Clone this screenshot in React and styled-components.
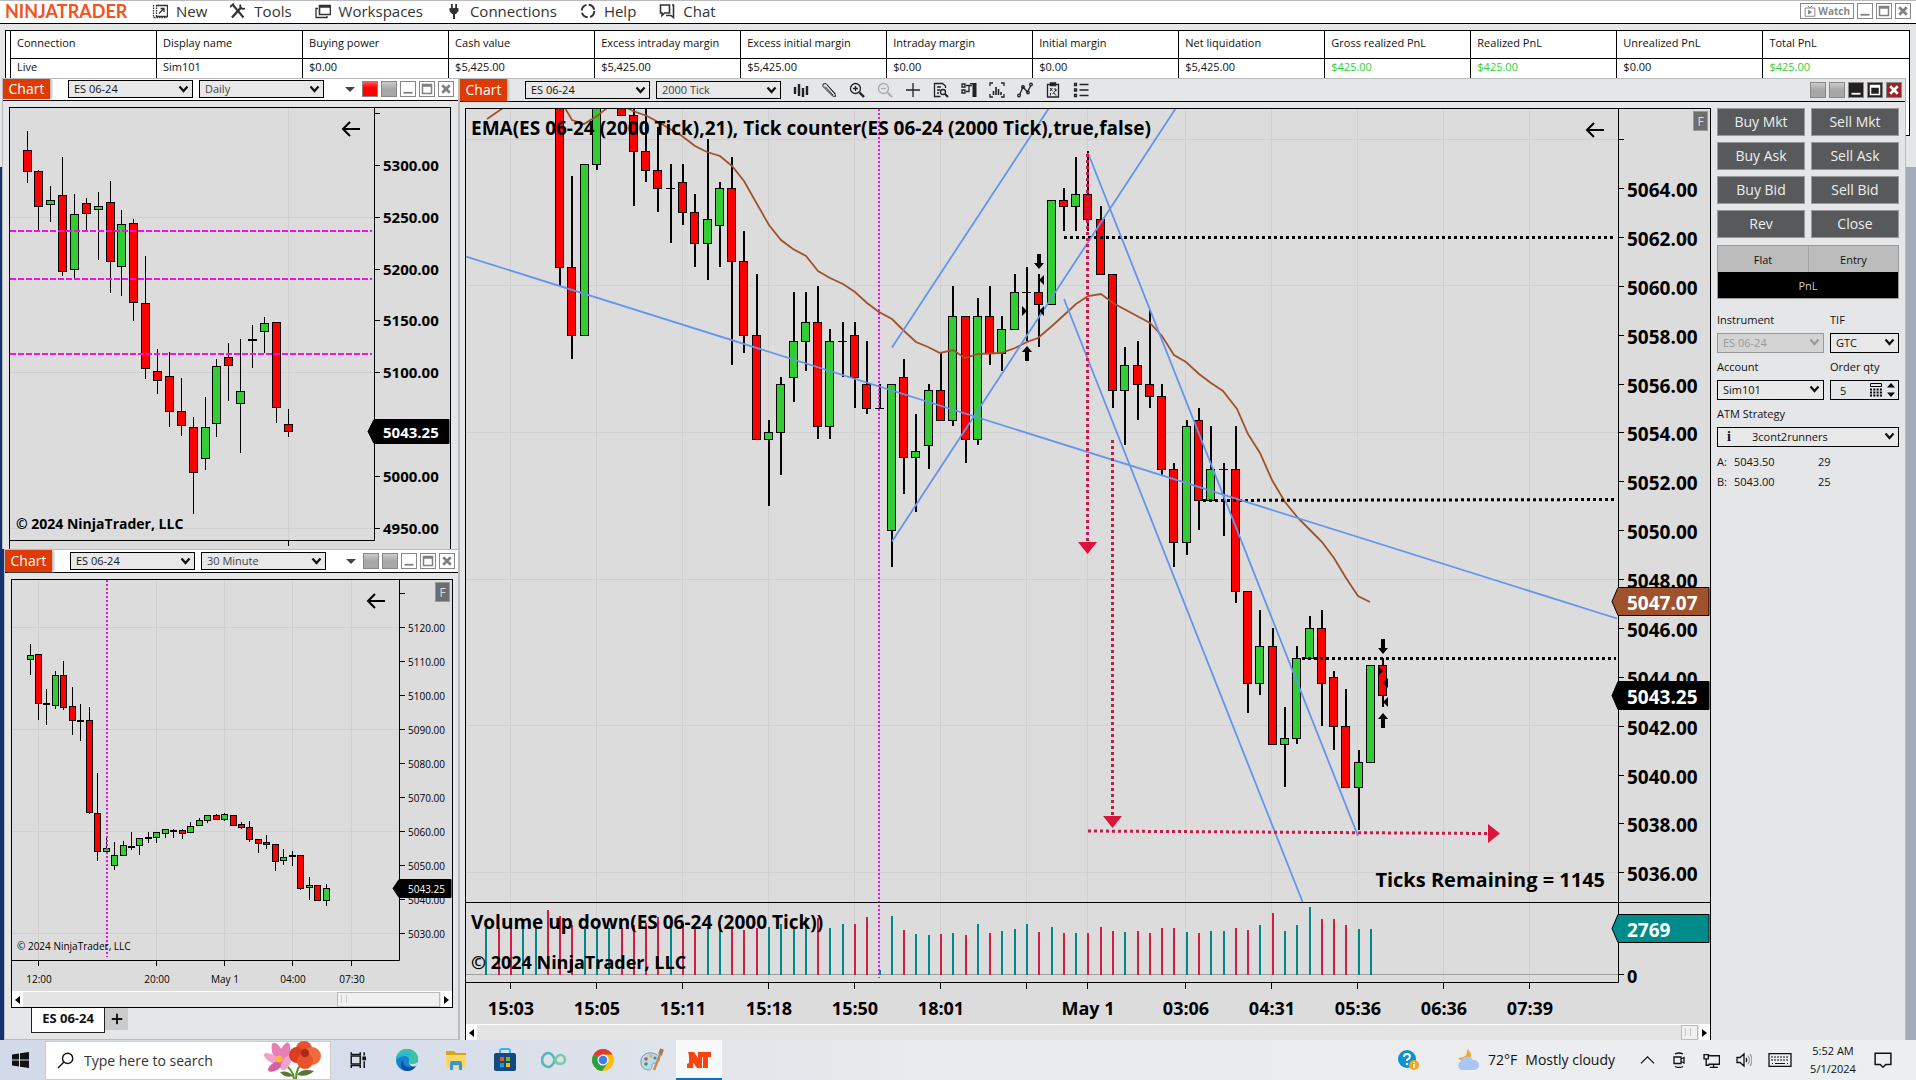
import React from "react";
import styled, { createGlobalStyle, css } from "styled-components";

const Global = createGlobalStyle`
  * { box-sizing: border-box; }
  html, body { margin: 0; height: 100%; }
  body { font-family: "Open Sans", "Noto Sans", sans-serif; font-size: 12px; color: #111; overflow: hidden; }
  button, select, input { font: inherit; color: inherit; margin: 0; padding: 0; border-radius: 0; }
  svg { display: block; }
`;

/* ---------- Desktop frame ---------- */

const Desktop = styled.div`
  display: flex;
  flex-direction: column;
  height: 100vh;
  background: linear-gradient(90deg, #14326e 50%, #a4abb8 50%);
`;

const AccountWindow = styled.header`
  flex: 0 0 167px;
  background: #e5e6e8;
  border-top: 1px solid #bbb;
`;

const Workspace = styled.main`
  flex: 1;
  min-height: 0;
  display: flex;
  margin-top: -89px;
  padding-right: 10px;
  position: relative;
`;

const LeftColumn = styled.div`
  flex: 0 0 459px;
  display: flex;
  flex-direction: column;
`;

/* ---------- Top menu ---------- */

const MenuBar = styled.div`
  height: 23px;
  display: flex;
  align-items: center;
  background: #fff;
  border-bottom: 1px solid #000;
  padding: 0 5px 2px;
`;

const Brand = styled.div`
  width: 147px;
  font: 700 18px/20px Lato, sans-serif;
  color: #f4511e;
`;

const Menu = styled.nav`
  display: flex;
  gap: 23px;
  flex: 1;
`;

const MenuButton = styled.button`
  display: flex;
  align-items: center;
  gap: 8px;
  background: none;
  border: 0;
  color: #333;
  font-size: 15px;
  line-height: 20px;
`;

const WatchButton = styled.button`
  height: 16px;
  display: flex;
  align-items: center;
  gap: 2px;
  padding: 0 3px;
  margin-right: 3px;
  background: #fff;
  border: 1px solid #888;
  color: #888;
  font-size: 10px;
  font-weight: 700;
  line-height: 14px;
`;

/* ---------- Account table ---------- */

const TableFrame = styled.div`
  height: 106px;
  margin: 6px 6px 0 5px;
  padding-left: 4px;
  border: 1px solid #000;
  background: #fff;
`;

const AccountTable = styled.table`
  width: 100%;
  table-layout: fixed;
  border-collapse: collapse;
  border-left: 1px solid #000;
  font-size: 11px;
  line-height: 16px;
  th, td {
    text-align: left;
    font-weight: 400;
    padding: 0 6px 2px;
    border-right: 1px solid #000;
    white-space: nowrap;
  }
  th { height: 27px; border-bottom: 1px solid #000; }
  td { height: 20px; }
  th:last-child, td:last-child { border-right: 0; }
`;

const Money = styled.td`
  color: ${(p) => (p.$gain ? "#32cd32" : "#111")};
`;

/* ---------- Windows ---------- */

const Window = styled.section`
  flex: ${(p) => p.$flex || "1"};
  min-width: 0;
  min-height: 0;
  display: flex;
  flex-direction: column;
  margin-left: ${(p) => p.$indent || 0}px;
  background: #e5e6e8;
  border: solid #b9bbbd;
  border-width: ${(p) => (p.$open ? "1px 1px 0" : "1px")};
`;

const TitleBar = styled.div`
  flex: 0 0 ${(p) => p.$height || 23}px;
  display: flex;
  align-items: center;
  gap: 6px;
  padding-right: ${(p) => p.$end || 3}px;
  padding-bottom: ${(p) => (p.$height ? 1 : 0)}px;
  background: ${(p) => (p.$grey ? "#e5e6e8" : "#fff")};
  border-bottom: 1px solid #000;
`;

const ChartTab = styled.button`
  align-self: stretch;
  width: 47px;
  margin-right: 12px;
  border: 0;
  background: #de3b04;
  color: #fff;
  font-size: 14px;
  line-height: 20px;
  box-shadow: 2px 0 2px #bbb;
`;

const SelectWrap = styled.div`
  position: relative;
  width: ${(p) => (p.$fill ? "100%" : "125px")};
  flex: none;
  svg { position: absolute; right: 4px; top: 5px; pointer-events: none; }
`;

const SelectBox = styled.select`
  display: block;
  width: 100%;
  height: ${(p) => p.$h || 18}px;
  appearance: none;
  border: 1px solid ${(p) => (p.disabled ? "#999" : "#000")};
  background: ${(p) => (p.disabled ? "#d4d4d4" : "#e8e8e8")};
  color: ${(p) => (p.disabled ? "#999" : p.$soft ? "#444" : "#111")};
  opacity: 1;
  padding-left: ${(p) => p.$pad || 5}px;
  font-size: 11px;
  line-height: 16px;
`;

const WindowKeys = styled.div`
  display: flex;
  align-items: center;
  gap: 3px;
  margin-left: auto;
`;

const keyLook = {
  red: css`background: linear-gradient(#ff5a5a, #f00 40%);`,
  grey: css`background: linear-gradient(#ccc, #a8a6a7 50%);`,
  plain: css`background: #fff;`,
  dark: css`background: #231f20; color: #fff;`,
  close: css`background: #9b2226; color: #fff;`,
};

const KeyButton = styled.button`
  width: 16px;
  height: 16px;
  display: grid;
  place-items: center;
  border: 1px solid #888;
  color: #808080;
  ${(p) => keyLook[p.$look]}
`;

const Caret = styled.span`
  border: 5px solid transparent;
  border-top-color: #444;
  border-bottom: 0;
  margin-right: 4px;
`;

const Tools = styled.div`
  display: flex;
  gap: 12px;
  margin-left: 6px;
`;

const ToolButton = styled.button`
  width: 16px;
  height: 16px;
  border: 0;
  background: none;
  color: ${(p) => (p.disabled ? "#aaa" : "#222")};
`;

const WindowBody = styled.div`
  flex: 1;
  min-height: 0;
  display: flex;
  flex-direction: ${(p) => (p.$row ? "row" : "column")};
  padding: 6px ${(p) => p.$right || 0}px 0 ${(p) => p.$left || 6}px;
`;

const ChartBox = styled.div`
  flex: 1;
  min-width: 0;
  min-height: 0;
  display: flex;
  flex-direction: column;
  border: 1px solid #000;
  border-bottom-width: ${(p) => (p.$open ? 0 : 1)}px;
  background: #dcdcdc;
`;

const Plot = styled.svg`
  flex: 1;
  min-height: 0;
  width: 100%;
  font-family: "Open Sans", "Noto Sans", sans-serif;
`;

const ScrollBar = styled.div`
  flex: 0 0 16px;
  min-height: 0;
  display: flex;
  border-top: 1px solid #fff;
  background: #e4e4e4;
`;

const ScrollArrow = styled.button`
  width: 11px;
  border: 0;
  background: #fff;
  display: grid;
  place-items: center;
`;

const ScrollThumb = styled.div`
  width: ${(p) => p.$w}px;
  margin-left: auto;
  margin-right: 1px;
  border: 1px solid #bbb;
  background: #f0f0f0;
  padding: 2px 3px;
  &::before { content: ""; display: block; width: 4px; height: 8px; border: solid #ccc; border-width: 0 1px; }
`;

const TabRow = styled.div`
  flex: 0 0 31px;
  display: flex;
  align-items: flex-start;
  padding-left: 20px;
`;

const SheetTab = styled.button`
  width: 74px;
  height: 25px;
  border: 1px solid #222;
  border-top: 0;
  background: #fff;
  font-size: 13px;
  font-weight: 700;
  line-height: 20px;
  padding-bottom: 4px;
`;

const AddTab = styled.button`
  width: 23px;
  height: 22px;
  border: 0;
  background: #cbcbcb;
  display: grid;
  place-items: center;
`;

/* ---------- Order panel ---------- */

const OrderPanel = styled.aside`
  flex: 0 0 194px;
  padding: 0 6px;
`;

const OrderGrid = styled.div`
  display: grid;
  grid-template-columns: 1fr 1fr;
  gap: 6px;
`;

const OrderButton = styled.button`
  height: 28px;
  border: 1px solid #999;
  background: #58595b;
  color: #eee;
  font-size: 14px;
  line-height: 20px;
`;

const Position = styled.div`
  display: grid;
  grid-template-columns: 1fr 1fr;
  margin-top: 7px;
  border: 1px solid #999;
`;

const PositionCell = styled.div`
  height: 26px;
  display: grid;
  place-items: center;
  font-size: 11px;
  background: #bcbcbc;
  & + & { border-left: 1px solid #a4a4a4; }
`;

const PnlButton = styled.button`
  grid-column: 1 / -1;
  height: 26px;
  border: 0;
  background: #000;
  color: #ccc;
  font-size: 11px;
`;

const FieldGrid = styled.div`
  display: grid;
  grid-template-columns: 107px 1fr;
  gap: 6px;
  margin-top: 13px;
`;

const Field = styled.div`
  grid-column: ${(p) => (p.$wide ? "1 / -1" : "auto")};
  label { display: block; font-size: 11px; line-height: 16px; padding-bottom: 5px; }
`;

const QtyBox = styled.div`
  height: 20px;
  display: flex;
  align-items: center;
  gap: 5px;
  padding: 0 3px 0 9px;
  border: 1px solid #000;
  input { width: 100%; min-width: 0; border: 0; background: none; font-size: 11px; outline: 0; }
  svg { flex: none; }
`;

const StrategyWrap = styled(SelectWrap)`
  &::before {
    content: "i";
    position: absolute;
    left: 10px;
    top: 1px;
    font: 700 14px/17px "Liberation Serif", serif;
  }
`;

const Quotes = styled.dl`
  display: grid;
  grid-template-columns: 17px 84px 1fr;
  margin: 5px 0 0;
  font-size: 11px;
  line-height: 20px;
  dt, dd { margin: 0; }
`;

/* ---------- Taskbar ---------- */

const Taskbar = styled.footer`
  flex: 0 0 40px;
  position: relative;
  display: flex;
  align-items: center;
  background: linear-gradient(90deg, #d2daea, #d9dfea 25%, #e9ebec 48%, #eceeef);
`;

const StartButton = styled.button`
  width: 45px;
  height: 40px;
  border: 0;
  background: none;
  display: grid;
  place-items: center;
  padding-right: 5px;
`;

const SearchBox = styled.label`
  width: 286px;
  height: 39px;
  display: flex;
  align-items: center;
  gap: 10px;
  padding: 0 8px 0 11px;
  background: #fff;
  border: 1px solid #ccc;
  input { flex: 1; min-width: 0; border: 0; outline: 0; font-size: 14px; background: none; }
  input::placeholder { color: #333; opacity: 1; }
`;

const AppButton = styled.button`
  width: ${(p) => (p.$active ? 46 : 49)}px;
  height: 40px;
  border: 0;
  display: grid;
  place-items: center;
  background: ${(p) => (p.$active ? "#f6f8fa" : "none")};
  box-shadow: ${(p) => (p.$active ? "inset 0 -2px #0f70c0" : "none")};
`;

const AppList = styled.div`
  display: flex;
  margin-left: 2px;
`;

const Tray = styled.div`
  display: flex;
  align-items: center;
  margin-left: auto;
  padding-right: 24px;
  gap: 16px;
`;

const Weather = styled.button`
  display: flex;
  align-items: center;
  gap: 8px;
  margin: 0 9px 0 21px;
  border: 0;
  background: none;
  font-size: 14px;
  line-height: 20px;
`;

const Clock = styled.time`
  width: 50px;
  font-size: 11px;
  line-height: 18px;
  text-align: center;
`;

/* ---------- Icons ---------- */

const Icon = ({ size = 16, children, ...rest }) => (
  <svg width={size} height={size} viewBox="0 0 16 16" fill="none" stroke="currentColor" strokeWidth="1.3" aria-hidden="true" {...rest}>
    {children}
  </svg>
);

const menuIcons = {
  New: <><path d="M4 2.500h11.500v11H4" strokeDasharray="30 0" /><path d="M1.500 2v13M2 14.500h13M4.500 2v11" strokeDasharray="1.500 1" /><path d="M7 10.500 11.500 6M8.500 5.500h3.500V9" /></>,
  Tools: <><path d="M2 14.500 11 4.500" strokeWidth="2.400" /><path d="M2.500 1.500 13.500 14.500" strokeWidth="2" /><path d="M0 4 4 .5M10.500 1.500c-1 3 1 5 4.500 4" strokeWidth="1.800" /></>,
  Workspaces: <><path d="M4.500 2.500h11v9h-11zM4.500 4h11" strokeWidth="1.600" /><path d="M3 5.500H1v9h11V13" /></>,
  Connections: <path d="M5 1h1.800v4h2.400V1H11v4h1.500v3L10 11H9v5H7v-5H6L3.500 8V5H5z" fill="currentColor" stroke="none" />,
  Help: <circle cx="8" cy="8" r="6.300" strokeWidth="2" strokeDasharray="7.500 2.400" />,
  Chat: <><path d="M1.500 2h9v8h-5L3 12.500V10H1.500z" strokeWidth="1.600" /><path d="M13 2h1.500v12.500L12 12.500H7" strokeWidth="1.600" /></>,
};

const toolIcons = [
  ["Bar style", <><path d="M2 5v7M6 2v12M10 6v9M14 4v9" strokeWidth="2.400" /></>],
  ["Draw", <path d="M2 2l3-.5 9 10 .5 3-3-.5L2 4.500zM4 4.500l8 8.500M6 3l8 9" strokeWidth="1" />],
  ["Zoom in", <><circle cx="6.500" cy="6.500" r="5" /><path d="M4 6.500h5M6.500 4v5" /><path d="M10.500 10.500 15 15" strokeWidth="2.400" /></>],
  ["Zoom out", <><circle cx="6.500" cy="6.500" r="5" /><path d="M4 6.500h5" /><path d="M10.500 10.500 15 15" strokeWidth="2" /></>, true],
  ["Crosshair", <path d="M8 1v14M1 8h14" />],
  ["Data box", <><path d="M12.500 6V4l-3-2.500h-8v13h6M4 5h4M4 8h3M4 11h2" /><circle cx="10" cy="10" r="2.500" /><path d="M12 12l3 3" strokeWidth="2" /></>],
  ["Chart trader", <><path d="M13.500 1v14" strokeWidth="4" /><path d="M9 1.700h3" /><path d="M1 2h3v3H1zM1 8h3v3H1zM5 3.500h6M5 9.500h3V3.500" /></>],
  ["Indicators", <><path d="M4 1H1v3M12 1h3v3M4 15H1v-3M12 15h3v-3" /><path d="M4.500 9v4M7 5v8M9.500 7V13M12 10v3" strokeWidth="1.600" /></>],
  ["Strategies", <><path d="M2.500 13 6 5l4.500 5L14 3" /><circle cx="2" cy="13.500" r="1.300" /><circle cx="6" cy="5" r="1.300" /><circle cx="11" cy="10.500" r="1.300" /><circle cx="14" cy="2.500" r="1.300" /></>],
  ["Performance", <><path d="M2.500 2.500h11v12.500h-11zM5.500 1h5v2.500h-5z" /><path d="M5 6l2.500 3M7.500 6 5 9M7.500 12l3.500-4M9 7h2v2M5.500 13.500v-2.500M9 11l2 2.500" strokeWidth="1" /></>],
  ["Properties", <path d="M1.500 1.500h2v2h-2zM1.500 7h2v2h-2zM1.500 12.500h2v2h-2zM6.500 2.500h9M6.500 8h9M6.500 13.500h9" />],
];

const Chevron = ({ grey }) => (
  <svg width="11" height="8" viewBox="0 0 11 8" fill="none" stroke={grey ? "#999" : "#111"} strokeWidth="2.200" aria-hidden="true">
    <path d="M1.500 1.500 5.500 6l4-4.500" />
  </svg>
);

const Minimize = () => <Icon size={12}><path d="M2 13h12" strokeWidth="2.400" /></Icon>;
const Maximize = () => <Icon size={12}><path d="M2 2h12v12H2zM2 4h12" strokeWidth="2" /></Icon>;
const Close = () => <Icon size={12}><path d="M3 3l10 10M13 3 3 13" strokeWidth="3.600" /></Icon>;

const ArrowGlyph = ({ right }) => (
  <svg width="5" height="8" viewBox="0 0 5 8" aria-hidden="true">
    <path d={right ? "M0 0l5 4-5 4z" : "M5 0 0 4l5 4z"} fill="#000" />
  </svg>
);

/* ---------- Shared controls ---------- */

const Picker = ({ label, value, soft }) => (
  <SelectWrap>
    <SelectBox aria-label={label} $soft={soft} defaultValue={value}>
      <option>{value}</option>
    </SelectBox>
    <Chevron />
  </SelectWrap>
);

const Keys = ({ looks, caret }) => (
  <WindowKeys>
    {caret && <Caret />}
    <KeyButton $look={looks[0]} aria-label="Instrument link" />
    <KeyButton $look={looks[1]} aria-label="Interval link" />
    <KeyButton $look={looks[2]} aria-label="Minimize"><Minimize /></KeyButton>
    <KeyButton $look={looks[3]} aria-label="Maximize"><Maximize /></KeyButton>
    <KeyButton $look={looks[4]} aria-label="Close"><Close /></KeyButton>
  </WindowKeys>
);

const Scroll = ({ thumb }) => (
  <ScrollBar>
    <ScrollArrow aria-label="Scroll left"><ArrowGlyph /></ScrollArrow>
    <ScrollThumb $w={thumb} />
    <ScrollArrow aria-label="Scroll right"><ArrowGlyph right /></ScrollArrow>
  </ScrollBar>
);

/* ---------- Chart primitives ---------- */

const FILL = { R: "#ff0000", G: "#32cd32" };

const Candle = ({ x, high, top, bottom, low, kind, half, wick }) => (
  <g shapeRendering="crispEdges">
    <rect x={x} y={high} width={wick} height={Math.max(1, low - high)} fill="#000" />
    {kind === "D" ? (
      <rect x={x - half} y={top} width={half * 2 + 1} height={wick === 2 ? 1 : 2} fill="#000" />
    ) : (
      <rect x={x - half + 0.5} y={top + 0.5} width={half * 2} height={Math.max(1, bottom - top)} fill={FILL[kind]} stroke="#000" />
    )}
  </g>
);

const BackArrow = ({ x, y }) => (
  <path d={`M${x + 18} ${y}H${x + 1}M${x + 8} ${y - 7}L${x + 1} ${y}L${x + 8} ${y + 7}`} fill="none" stroke="#000" strokeWidth="2" />
);

const PriceTag = ({ x, right, y, h, color, size, tx, children }) => (
  <g>
    <path d={`M${x} ${y}L${x + 6} ${y - h / 2}H${right}V${y + h / 2}H${x + 6}Z`} fill={color} stroke="#000" />
    <text x={tx} y={y + size / 2 - 1} fontSize={size} fontWeight={size > 12 ? 700 : 400} fill="#fff">{children}</text>
  </g>
);

const FBadge = ({ x, y }) => (
  <g>
    <rect x={x} y={y} width="14" height="19" fill="#6d6d6d" stroke="#999" />
    <text x={x + 7} y={y + 14} fontSize="12" textAnchor="middle" fill="#ddd">F</text>
  </g>
);

/* ---------- Daily and half-hour data: three units per pixel ---------- */

const DAILY = [
  [82, "R", 168, 226, 288, 326], [115, "R", 285, 289, 395, 473], [151, "G", 333, 376, 389, 443],
  [187, "R", 246, 361, 590, 605], [223, "G", 357, 418, 584, 610], [259, "R", 369, 385, 416, 466],
  [295, "G", 353, 394, 402, 557], [331, "R", 318, 381, 560, 656], [364, "G", 405, 448, 575, 665],
  [400, "R", 432, 445, 683, 738], [436, "R", 543, 685, 881, 914], [472, "R", 822, 889, 917, 959],
  [508, "R", 831, 904, 1010, 1058], [544, "R", 909, 1009, 1052, 1085], [580, "R", 1026, 1057, 1193, 1319],
  [616, "G", 966, 1057, 1151, 1187], [649, "G", 852, 874, 1046, 1088], [685, "R", 804, 847, 872, 980],
  [721, "G", 792, 949, 986, 1136], [757, "D", 750, 793, 795, 881], [793, "G", 726, 744, 770, 836],
  [829, "R", 742, 742, 998, 1046], [865, "R", 1002, 1048, 1070, 1088],
];

const HALF_HOUR = [
  [91, "G", 297, 331, 342, 392], [115, "R", 328, 328, 476, 527], [139, "D", 432, 475, 477, 540],
  [167, "G", 378, 391, 482, 494], [190, "R", 348, 391, 488, 497], [217, "R", 426, 484, 527, 570],
  [241, "D", 477, 525, 526, 588], [268, "R", 486, 526, 803, 809], [292, "R", 684, 805, 920, 950],
  [319, "G", 876, 910, 920, 925], [343, "G", 892, 931, 962, 977], [370, "G", 888, 901, 932, 932],
  [394, "D", 861, 904, 905, 917], [418, "G", 880, 880, 902, 932], [446, "D", 861, 877, 879, 896],
  [469, "G", 862, 862, 878, 896], [496, "G", 853, 853, 866, 881], [520, "D", 853, 855, 857, 881],
  [547, "R", 853, 856, 866, 884], [571, "G", 831, 844, 863, 866], [598, "G", 819, 826, 842, 843],
  [622, "G", 811, 811, 827, 836], [649, "R", 808, 811, 824, 824], [673, "G", 804, 808, 824, 830],
  [700, "R", 811, 811, 842, 842], [724, "R", 832, 838, 848, 854], [748, "R", 828, 847, 884, 893],
  [775, "R", 882, 882, 896, 926], [799, "R", 870, 892, 899, 914], [826, "R", 898, 898, 950, 978],
  [850, "G", 912, 937, 947, 962], [877, "D", 918, 931, 932, 965], [901, "R", 931, 931, 1031, 1037],
  [928, "G", 996, 1021, 1028, 1067], [952, "R", 1021, 1021, 1067, 1067], [979, "G", 1018, 1030, 1067, 1085],
];

const SmallCandles = ({ data, base, half }) => {
  const y = (v) => base + Math.floor(v / 3);
  return data.map(([x, kind, h, t, b, l]) => (
    <Candle key={x} x={Math.floor(x / 3)} kind={kind} high={y(h)} top={y(t)} bottom={y(b)} low={y(l)} half={half} wick={1} />
  ));
};

const DailyChart = () => {
  const levels = [[5300, 165], [5250, 217], [5200, 269], [5150, 320], [5100, 372], [5000, 476], [4950, 528]];
  return (
    <Plot viewBox="10 108 440 441" preserveAspectRatio="xMinYMin meet" role="img" aria-label="ES 06-24 daily chart">
      <path d="M10 217.500H374M10 372.500H374M10 528.500H374M288.500 108V540" stroke="#d0d0d0" />
      <SmallCandles data={DAILY} base={75} half={4} />
      <path d="M10 231H372M10 279H372M10 354H372" stroke="#f012e0" strokeWidth="2" strokeDasharray="6 2" shapeRendering="crispEdges" />
      <BackArrow x={342} y={129} />
      <path d="M374.500 108V540.500H10M288.500 540V546M375 113.500h5" stroke="#000" fill="none" />
      {levels.map(([price, y]) => (
        <g key={price}>
          <path d={`M375 ${y + 0.5}h5`} stroke="#000" />
          <text x="383" y={y + 6} fontSize="15" fontWeight="700">{price}.00</text>
        </g>
      ))}
      <PriceTag x={368} right={449} y={431.5} h={24} size={15} tx={383} color="#000">5043.25</PriceTag>
      <text x="16" y="529" fontSize="14" fontWeight="700">© 2024 NinjaTrader, LLC</text>
    </Plot>
  );
};

const HalfHourChart = () => {
  const times = [["12:00", 38], ["20:00", 156], ["May 1", 224], ["04:00", 292], ["07:30", 351]];
  const prices = Array.from({ length: 10 }, (_, i) => [5120 - i * 10, 627 + i * 34]);
  return (
    <Plot viewBox="12 580 440 411" preserveAspectRatio="xMinYMin meet" role="img" aria-label="ES 06-24 30 minute chart">
      {times.map(([t, x]) => <path key={t} d={`M${x + 0.5} 580V960`} stroke="#d0d0d0" />)}
      <path d="M12 627.500H399M12 729.500H399M12 831.500H399M12 933.500H399" stroke="#d0d0d0" />
      <SmallCandles data={HALF_HOUR} base={545} half={3} />
      <path d="M107 580V957" stroke="#d61ad6" strokeWidth="2" strokeDasharray="2 2" shapeRendering="crispEdges" />
      <BackArrow x={367} y={601} />
      <path d="M399.500 580V960.500H12M400 593.500h5" stroke="#000" fill="none" />
      {prices.map(([price, y]) => (
        <g key={price}>
          <path d={`M400 ${y + 0.5}h5`} stroke="#000" />
          <text x="408" y={y + 5} fontSize="10">{price}.00</text>
        </g>
      ))}
      {times.map(([t, x]) => (
        <g key={t}>
          <path d={`M${x + 0.5} 961v5`} stroke="#000" />
          <text x={x + 1} y="983" fontSize="10" textAnchor="middle">{t}</text>
        </g>
      ))}
      <PriceTag x={393} right={451} y={888.5} h={18} size={10} tx={408} color="#000">5043.25</PriceTag>
      <FBadge x={435.5} y={582.5} />
      <text x="17" y="950" fontSize="10">© 2024 NinjaTrader, LLC</text>
    </Plot>
  );
};

/* ---------- Tick chart: high, top, bottom, low in quarter points below 5064 ---------- */

const FIRST_CANDLE = 4;
const TICKS = `R -20 -20 13 16|R -2 13 24 28|G -4 -4 24 24|G -20 -20 -4 -3|R -20 -20 -19 -19|R -20 -20 -12 -12|R -13 -12 -6 3|R -20 -6 -3 -1|R -10 -3 0 4|D -4 0 0 9|R -4 -1 4 6|R 1 4 9 13|G -8 5 9 15|G -1 0 6 13|R -5 0 12 29|R 7 12 24 27|R 14 24 41 41|G 38 40 41 52|G 31 32 40 47|G 17 25 31 35|G 17 22 25 30|R 16 22 39 41|G 23 25 39 41|D 22 25 25 31|R 22 24 31 36|R 25 32 36 37|D 32 36 36 36|G 32 32 56 62|R 28 31 44 50|G 37 43 44 53|G 32 33 42 46|R 27 33 38 38|G 16 21 38 39|R 21 21 41 45|G 18 21 41 42|R 16 21 27 29|G 21 23 27 30|G 14 17 23 23|D 13 17 17 25|R 14 17 19 26|G 2 2 19 19|R 0 2 3 7|G -5 1 3 7|R -6 1 5 7|R 3 5 14 14|R 14 14 33 36|G 26 29 33 42|R 25 29 32 38|R 20 32 34 36|R 32 34 46 47|R 45 46 58 62|G 38 39 58 60|R 36 38 51 56|G 39 46 51 51|D 45 46 46 57|R 39 46 66 68|R 66 66 81 86|G 69 75 81 83|R 72 75 91 91|G 85 90 91 98|G 75 77 90 91|G 70 72 77 77|R 69 72 81 88|R 79 80 88 92|R 82 88 98 98|G 92 94 98 105|G 78 78 94 94|R 77 78 83 85`
  .split("|")
  .map((row) => row.split(" "));

const VOLUME = "T47 R47 R47 T47 T47 R65 R59 R50 T48 T48 T47 R47 R50 R52 R58 T48 R51 R47 T48 T51 R47 R45 R47 T48 T51 T48 T58 R57 T47 T51 R51 R58 T5 T59 R45 T41 T40 R41 T42 R40 T51 R42 T44 T46 T51 R43 T48 R42 T42 R42 R48 R44 T43 R44 R42 R47 R47 T43 R42 T44 T44 R47 R45 T50 R62 T44 T50 T68 R56 R56 R50 T46 T46".split(" ");

const barX = (k) => 510 + Math.round((k * 86) / 7);
const tickY = (n) => 188 + Math.round(n * 6.11);

const EMA = [
  "487,119 503,108",
  "565,108 572,120 584,124 597,116 607,108",
  "627,108 633,111 647,116 660,123 670,129 682,136 695,146 707,152 720,156 732,166 744,181 757,204 769,225 781,240 793,249 806,256 818,271 830,278 843,284 855,292 867,303 879,312 892,319 903,330 916,342 928,347 940,353 953,350 965,358 978,354 1001,353 1015,348 1027,342 1038,338 1052,326 1063,316 1076,304 1088,296 1101,294 1113,303 1137,316 1150,323 1162,336 1174,355 1186,362 1199,374 1211,383 1223,391 1237,409 1248,434 1260,453 1272,480 1285,502 1298,518 1309,529 1322,542 1334,558 1346,578 1358,596 1370,602",
];

const Fill = ({ x, y, up }) => {
  const s = up ? -1 : 1;
  return <path d={`M${x - 2} ${y - 7 * s}h4v${9 * s}h3l-5 ${6 * s}l-5 ${-6 * s}h3z`} fill="#000" />;
};

const Marker = ({ x, y, right }) => (
  <path d={right ? `M${x - 2} ${y - 5}l5 5l-5 5z` : `M${x + 2} ${y - 5}l-5 5l5 5z`} fill="#000" />
);

const TickChart = () => {
  const times = [
    [510, "15:03"], [596, "15:05"], [682, "15:11"], [768, "15:18"], [854, "15:50"], [940, "18:01"], [1026, ""],
    [1087, "May 1"], [1185, "03:06"], [1271, "04:31"], [1357, "05:36"], [1443, "06:36"], [1529, "07:39"],
  ];
  const prices = Array.from({ length: 15 }, (_, i) => 5064 - i * 2);
  return (
    <Plot viewBox="466 109 1244 915" preserveAspectRatio="xMinYMin meet" role="img" aria-label="ES 06-24 2000 tick chart">
      {times.map(([x]) => <path key={x} d={`M${x + 0.5} 109V982`} stroke="#d0d0d0" />)}
      {[139, 285, 432, 579, 725, 872].map((y) => <path key={y} d={`M466 ${y + 0.5}H1618`} stroke="#d0d0d0" />)}
      <path d="M466 974.500H1618" stroke="#a0a0a0" />

      {VOLUME.map((bar, i) => {
        const h = Number(bar.slice(1));
        return <rect key={i} x={barX(i - 2)} y={975 - h} width="2" height={h} fill={bar[0] === "T" ? "#088" : "#cf1f45"} shapeRendering="crispEdges" />;
      })}

      {TICKS.map(([kind, h, t, b, l], i) => (
        <Candle key={i} x={barX(i + FIRST_CANDLE)} kind={kind} high={tickY(h)} top={tickY(t)} bottom={tickY(b)} low={tickY(l)} half={4} wick={2} />
      ))}

      {EMA.map((points) => <polyline key={points} points={points} fill="none" stroke="#a0522d" strokeWidth="1.800" />)}

      <g stroke="#000" strokeWidth="3" strokeDasharray="3 3">
        <path d="M1064 237.500H1616M1203 500.500L1615 499.500M1302 658.500H1616" />
      </g>
      <g stroke="#6495ed" strokeWidth="1.800">
        <path d="M466 256.500L1617 618.500M892 347.500L1049 108M892 541.500L1176 108M1088 153L1358 836M1064 299L1303 903" />
      </g>
      <g stroke="#c81a48" strokeWidth="3" strokeDasharray="3 3">
        <path d="M1087.500 154V541M1112.500 440V815M1088 831L1487 833.500" />
      </g>
      <path d="M1078 542h19l-9.500 12zM1103 816h19l-9.500 12zM1488 824v19l12-9.500z" fill="#dc143c" />
      <path d="M879 109V978" stroke="#e815e8" strokeWidth="2" strokeDasharray="2 2" shapeRendering="crispEdges" />

      <Fill x={1039} y={261} />
      <Fill x={1027} y={354} up />
      <Fill x={1383} y={646} />
      <Fill x={1383} y={721} up />
      <Marker x={1042} y={280} />
      <Marker x={1042} y={311} />
      <Marker x={1024} y={311} right />
      <Marker x={1380} y={671} right />
      <Marker x={1386} y={683} />
      <Marker x={1386} y={702} />

      <path d="M1618.500 109V982.500H466M466 902.500H1710M1619 139.500h5M1619 974.500h5" stroke="#000" fill="none" />
      {times.map(([x, label]) => (
        <g key={x}>
          <path d={`M${x + 0.5} 983v6`} stroke="#000" />
          <text x={x + 1} y="1015" fontSize="18" fontWeight="700" textAnchor="middle">{label}</text>
        </g>
      ))}
      {prices.map((p, i) => {
        const y = 188 + Math.round(i * 48.88);
        return (
          <g key={p}>
            <path d={`M1619 ${y + 0.5}h5`} stroke="#000" />
            <text x="1627" y={y + 9} fontSize="19" fontWeight="700">{p}.00</text>
          </g>
        );
      })}
      <text x="1627" y="983" fontSize="18" fontWeight="700">0</text>
      <PriceTag x={1612} right={1709} y={601.5} h={28} size={19} tx={1627} color="#a0522d">5047.07</PriceTag>
      <PriceTag x={1612} right={1709} y={695.5} h={28} size={19} tx={1627} color="#000">5043.25</PriceTag>
      <PriceTag x={1612} right={1709} y={928.5} h={28} size={19} tx={1627} color="#008b8b">2769</PriceTag>

      <g fontSize="19" fontWeight="700">
        <text x="471" y="135">EMA(ES 06-24 (2000 Tick),21), Tick counter(ES 06-24 (2000 Tick),true,false)</text>
        <text x="1605" y="887" fontSize="20" textAnchor="end">Ticks Remaining = 1145</text>
        <text x="471" y="929">Volume up down(ES 06-24 (2000 Tick))</text>
        <text x="471" y="969" fontSize="18">© 2024 NinjaTrader, LLC</text>
      </g>
      <BackArrow x={1586} y={130} />
      <FBadge x={1693.5} y={111.5} />
    </Plot>
  );
};

/* ---------- Page sections ---------- */

const ACCOUNT = [
  ["Connection", "Live"], ["Display name", "Sim101"], ["Buying power", "$0.00"], ["Cash value", "$5,425.00"],
  ["Excess intraday margin", "$5,425.00"], ["Excess initial margin", "$5,425.00"], ["Intraday margin", "$0.00"],
  ["Initial margin", "$0.00"], ["Net liquidation", "$5,425.00"], ["Gross realized PnL", "$425.00"],
  ["Realized PnL", "$425.00"], ["Unrealized PnL", "$0.00"], ["Total PnL", "$425.00"],
];

const Account = () => (
  <AccountWindow>
    <MenuBar>
      <Brand>NINJATRADER</Brand>
      <Menu>
        {Object.entries(menuIcons).map(([name, icon]) => (
          <MenuButton key={name}><Icon>{icon}</Icon>{name}</MenuButton>
        ))}
      </Menu>
      <WatchButton>
        <Icon size={12}><path d="M1.500 4h13v11h-13zM5 1l3 3 3-3" /><path d="M6 7v5l4-2.500z" fill="currentColor" /></Icon>
        Watch
      </WatchButton>
      <WindowKeys>
        <KeyButton $look="plain" aria-label="Minimize"><Minimize /></KeyButton>
        <KeyButton $look="plain" aria-label="Maximize"><Maximize /></KeyButton>
        <KeyButton $look="plain" aria-label="Close"><Close /></KeyButton>
      </WindowKeys>
    </MenuBar>
    <TableFrame>
      <AccountTable>
        <thead><tr>{ACCOUNT.map(([h]) => <th key={h} scope="col">{h}</th>)}</tr></thead>
        <tbody><tr>{ACCOUNT.map(([h, v]) => <Money key={h} $gain={v === "$425.00"}>{v}</Money>)}</tr></tbody>
      </AccountTable>
    </TableFrame>
  </AccountWindow>
);

const Trader = () => (
  <OrderPanel>
    <OrderGrid>
      {["Buy Mkt", "Sell Mkt", "Buy Ask", "Sell Ask", "Buy Bid", "Sell Bid", "Rev", "Close"].map((t) => (
        <OrderButton key={t}>{t}</OrderButton>
      ))}
    </OrderGrid>
    <Position>
      <PositionCell>Flat</PositionCell>
      <PositionCell>Entry</PositionCell>
      <PnlButton>PnL</PnlButton>
    </Position>
    <FieldGrid>
      <Field>
        <label htmlFor="instrument">Instrument</label>
        <SelectWrap $fill><SelectBox id="instrument" $h={20} disabled><option>ES 06-24</option></SelectBox><Chevron grey /></SelectWrap>
      </Field>
      <Field>
        <label htmlFor="tif">TIF</label>
        <SelectWrap $fill><SelectBox id="tif" $h={20}><option>GTC</option></SelectBox><Chevron /></SelectWrap>
      </Field>
      <Field>
        <label htmlFor="account">Account</label>
        <SelectWrap $fill><SelectBox id="account" $h={20}><option>Sim101</option></SelectBox><Chevron /></SelectWrap>
      </Field>
      <Field>
        <label htmlFor="qty">Order qty</label>
        <QtyBox>
          <input id="qty" defaultValue="5" />
          <svg width="12" height="14" viewBox="0 0 12 14" aria-hidden="true">
            <path d="M.5.5h11v3H.5z" fill="none" stroke="#000" />
            <path d="M0 6.500h12M0 9.500h12M0 12.500h12" stroke="#000" strokeWidth="2" strokeDasharray="2 1.300" />
          </svg>
          <svg width="8" height="14" viewBox="0 0 8 14" aria-hidden="true"><path d="M0 4.500 4 0l4 4.500zM0 9.500 4 14l4-4.500z" /></svg>
        </QtyBox>
      </Field>
      <Field $wide>
        <label htmlFor="atm">ATM Strategy</label>
        <StrategyWrap $fill><SelectBox id="atm" $h={20} $pad={34}><option>3cont2runners</option></SelectBox><Chevron /></StrategyWrap>
      </Field>
    </FieldGrid>
    <Quotes>
      <dt>A:</dt><dd>5043.50</dd><dd>29</dd>
      <dt>B:</dt><dd>5043.00</dd><dd>25</dd>
    </Quotes>
  </OrderPanel>
);

const Flowers = () => (
  <svg width="58" height="38" viewBox="0 0 58 38" aria-hidden="true">
    <path d="M30 38C29 30 25 26 18 22M32 38c0-9 3-13 8-18" stroke="#5d8f1f" strokeWidth="2" fill="none" />
    <path d="M29 35c-4-5-9-5-13-4 3 4 8 6 13 4zM33 34c3-5 9-6 17-4-4 4-10 6-17 4z" fill="#56763a" />
    <g fill="#e77fb4">
      <ellipse cx="14" cy="13" rx="5" ry="12" transform="rotate(-22 14 13)" />
      <ellipse cx="20" cy="14" rx="5" ry="13" transform="rotate(18 20 14)" />
      <ellipse cx="9" cy="18" rx="4" ry="10" transform="rotate(-62 9 18)" fill="#f0a3cb" />
      <ellipse cx="12" cy="25" rx="4" ry="9" transform="rotate(60 12 25)" fill="#d761a3" />
      <ellipse cx="22" cy="22" rx="4" ry="8" transform="rotate(30 22 22)" fill="#f0a3cb" />
    </g>
    <circle cx="15" cy="18" r="3.500" fill="#f6b73c" />
    <g fill="#e9532c">
      <circle cx="40" cy="8" r="8" /><circle cx="33" cy="14" r="8" fill="#d93d22" /><circle cx="48" cy="15" r="9" fill="#f06b3d" /><circle cx="41" cy="20" r="8" />
    </g>
    <circle cx="41" cy="12" r="4" fill="#a92a1c" />
  </svg>
);

const apps = [
  ["Task View", <Icon size={18} stroke="#111"><path d="M2 4.500h8v7H2zM2 1v2h8V1M2 15v-2h8v2M13.500 1v3M13.500 9v6" /><path d="M12.500 5.500h2v2h-2z" fill="#111" /></Icon>],
  ["Edge", (
    <svg width="24" height="24" viewBox="0 0 24 24">
      <circle cx="12" cy="12" r="11" fill="#1583d0" />
      <path d="M1 12C1 5 6 1 12 1c7 0 11 5 11 9 0 4-3 6-6 6-2 0-4-1-3-3 1-3-2-5-5-5-4 0-7 2-8 4z" fill="#3cc3a0" />
      <path d="M1 12c1-5 5-8 10-8 4 0 7 3 7 6-2-2-5-3-8-2-4 0-7 2-9 4z" fill="#2fb6dc" />
      <path d="M8 12c-1 6 5 9 13 6-2 3-5 5-9 5-6-1-8-7-4-11z" fill="#0c4f9c" />
      <path d="M14 13c-1 2 1 3 3 3 3 0 5-1 6-3 0 2-1 4-2 5-4 1-8-1-7-5z" fill="#d9dfea" />
    </svg>
  )],
  ["File Explorer", (
    <svg width="22" height="20" viewBox="0 0 22 20">
      <path d="M1 1h8l2 2h10v5H1z" fill="#d9a21b" /><path d="M1 5h20v13H1z" fill="#fcd766" />
      <path d="M5 20v-7q0-2 2-2h8q2 0 2 2v7h-3v-5H8v5z" fill="#3b94d4" />
    </svg>
  )],
  ["Store", (
    <svg width="24" height="24" viewBox="0 0 24 24">
      <path d="M7 7V3q0-2 2-2h6q2 0 2 2v4" fill="none" stroke="#35b6ea" strokeWidth="2" /><rect x="1" y="5" width="22" height="18" rx="2" fill="#134a80" />
      <path d="M7 9h4v4H7z" fill="#f25022" /><path d="M13 9h4v4h-4z" fill="#7fba00" /><path d="M7 15h4v4H7z" fill="#00a4ef" /><path d="M13 15h4v4h-4z" fill="#ffb900" />
    </svg>
  )],
  ["Loop", (
    <svg width="26" height="18" viewBox="0 0 26 18" fill="none" strokeWidth="2.600">
      <path d="M14 9C12 4 10 2 7.500 2a6 6.500 0 0 0 0 14C10 16 12 14 14 9" stroke="#58b7b5" /><path d="M14 9c2-4 3-5 5.500-5a4.500 4.500 0 0 1 0 9C17 13 15 12 14 9" stroke="#79c9a4" />
    </svg>
  )],
  ["Chrome", (
    <svg width="24" height="24" viewBox="0 0 24 24">
      <circle cx="12" cy="12" r="11" fill="#fbbf12" /><path d="M12 12 2.500 6.500A11 11 0 0 1 21.500 6.500H12z" fill="#e33b2e" />
      <path d="M12 12 2.500 6.500A11 11 0 0 0 11 23l6-8z" fill="#28a048" /><circle cx="12" cy="12" r="5.500" fill="#fff" /><circle cx="12" cy="12" r="4.300" fill="#3d7ff0" />
    </svg>
  )],
  ["Paint", (
    <svg width="24" height="24" viewBox="0 0 24 24">
      <path d="M1 15C0 8 6 4 12 5c7 1 9 6 6 9-2 2-6 0-6 3 0 2 0 5-4 5-4-1-7-3-7-7z" fill="#b9dcef" stroke="#6c9ebd" />
      <circle cx="6" cy="11" r="1.800" fill="#e04b3c" /><circle cx="11" cy="8" r="1.800" fill="#f3b61f" /><circle cx="6" cy="16" r="1.800" fill="#3a9e4b" /><circle cx="15" cy="10" r="1.600" fill="#3b7ad8" />
      <path d="M20 7 14 22" stroke="#c58a4d" strokeWidth="2.400" /><path d="M22 1 20 7" stroke="#b07a50" strokeWidth="4" />
    </svg>
  )],
  ["NinjaTrader", (
    <svg width="24" height="16" viewBox="0 0 24 16">
      <path d="M1 0h6l4 6V0h13v5h-3v11h-5V5h-1v11h-5L6 10v6H0v-4l2-1V4z" fill="#f9440f" />
    </svg>
  )],
];

const Bar = () => (
  <Taskbar>
    <StartButton aria-label="Start">
      <svg width="17" height="16" viewBox="0 0 17 16"><path d="M0 2.500 7 1.500V7.500H0zM8 1.300 17 0V7.500H8zM0 8.500H7V14.500L0 13.500zM8 8.500H17V16L8 14.700z" fill="#111" /></svg>
    </StartButton>
    <SearchBox>
      <Icon size={17} stroke="#111"><circle cx="10" cy="6" r="4.800" /><path d="M6.500 9.500 1 15" /></Icon>
      <input placeholder="Type here to search" aria-label="Search" />
      <Flowers />
    </SearchBox>
    <AppList>
      {apps.map(([name, icon]) => (
        <AppButton key={name} aria-label={name} $active={name === "NinjaTrader"}>{icon}</AppButton>
      ))}
    </AppList>
    <Tray>
      <svg width="22" height="22" viewBox="0 0 22 22" aria-hidden="true">
        <circle cx="10" cy="10" r="9" fill="#0c93cf" /><path d="M7 8q0-3 3-3t3 2.500Q13 9 10 11v1" fill="none" stroke="#fff" strokeWidth="2" /><circle cx="10" cy="15" r="1.300" fill="#fff" />
        <circle cx="17" cy="16" r="5" fill="#f0a61e" /><path d="M17 13v1M17 15v4" stroke="#fff" strokeWidth="1.500" />
      </svg>
      <Weather>
        <svg width="24" height="24" viewBox="0 0 24 24" aria-hidden="true">
          <path d="M11 1c1 5-2 9-9 9 4 5 12 3 13-2 0-3-1-5-4-7z" fill="#f2a92c" />
          <path d="M5 22a5 5 0 0 1 0-9 6.500 6.500 0 0 1 12-1 5 5 0 0 1 2 10z" fill="#a9c6f5" />
        </svg>
        <span>72°F</span>
        <span>Mostly cloudy</span>
      </Weather>
      <Icon stroke="#111" size={15}><path d="M1 11l7-7 7 7" /></Icon>
      <Icon stroke="#111"><path d="M3 5h7v6.500H3zM10 7l3-1.500v5.500l-3-1.500M4 2q4-2 8 0M4 14.500q4 2 8 0" /></Icon>
      <Icon stroke="#111" size={17}><path d="M5 3.500h10.500v8H5M10 11.500v3M6.500 14.500H14M1 2.500h4v4H1zM3 6.500v6h3" /></Icon>
      <Icon stroke="#111"><path d="M1 5.500h3L8 2v12L4 10.500H1zM10 6q1.500 2 0 4" /><path d="M12 4q3 4 0 8M14 2q4 6 0 12" stroke="#999" /></Icon>
      <svg width="24" height="14" viewBox="0 0 24 14" fill="none" stroke="#111" aria-hidden="true">
        <path d="M1 .5h22v13H1z" strokeWidth="1.300" /><path d="M3 4h18M3 7h18" strokeDasharray="2 1" /><path d="M4 10.500h1M7 10.500h10M19 10.500h1" />
      </svg>
      <Clock>5:52 AM 5/1/2024</Clock>
      <Icon stroke="#111" size={18}><path d="M1 2h14v10h-4.500L8 14.500 5.500 12H1z" /></Icon>
    </Tray>
  </Taskbar>
);

export default function App() {
  return (
    <Desktop>
      <Global />
      <Account />
      <Workspace>
        <LeftColumn>
          <Window $flex="0 0 471px" $indent={2} $open>
            <TitleBar $height={22} $end={4}>
              <ChartTab>Chart</ChartTab>
              <Picker label="Instrument" value="ES 06-24" />
              <Picker label="Interval" value="Daily" soft />
              <Keys caret looks={["red", "grey", "plain", "plain", "plain"]} />
            </TitleBar>
            <WindowBody $right={7}>
              <ChartBox $open><DailyChart /></ChartBox>
            </WindowBody>
          </Window>
          <Window $indent={4}>
            <TitleBar>
              <ChartTab>Chart</ChartTab>
              <Picker label="Instrument" value="ES 06-24" />
              <Picker label="Interval" value="30 Minute" soft />
              <Keys caret looks={["grey", "grey", "plain", "plain", "plain"]} />
            </TitleBar>
            <WindowBody $right={5}>
              <ChartBox>
                <HalfHourChart />
                <Scroll thumb={103} />
              </ChartBox>
              <TabRow>
                <SheetTab>ES 06-24</SheetTab>
                <AddTab aria-label="Add tab"><Icon size={12} strokeWidth="2.500"><path d="M8 1v14M1 8h14" /></Icon></AddTab>
              </TabRow>
            </WindowBody>
          </Window>
        </LeftColumn>
        <Window $open>
          <TitleBar $grey>
            <ChartTab>Chart</ChartTab>
            <Picker label="Instrument" value="ES 06-24" />
            <Picker label="Interval" value="2000 Tick" soft />
            <Tools>
              {toolIcons.map(([name, icon, off]) => (
                <ToolButton key={name} aria-label={name} disabled={off}><Icon>{icon}</Icon></ToolButton>
              ))}
            </Tools>
            <Keys looks={["grey", "grey", "dark", "dark", "close"]} />
          </TitleBar>
          <WindowBody $row $left={5}>
            <ChartBox $open>
              <TickChart />
              <Scroll thumb={17} />
            </ChartBox>
            <Trader />
          </WindowBody>
        </Window>
      </Workspace>
      <Bar />
    </Desktop>
  );
}
